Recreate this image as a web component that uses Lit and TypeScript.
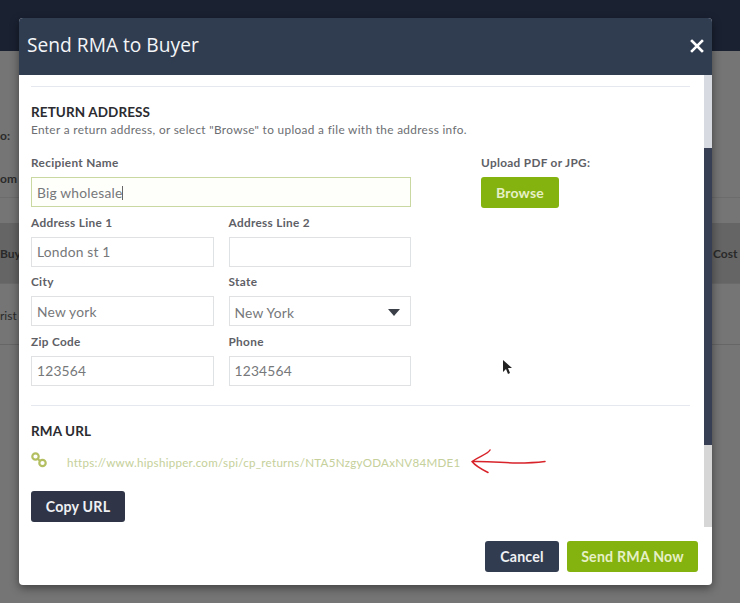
import { LitElement, html, css } from "lit";
import { customElement } from "lit/decorators.js";

@customElement("app-root")
export class AppRoot extends LitElement {
  static styles = css`
    :host { display: block; width: 740px; height: 603px; position: relative; overflow: hidden; background: #747474; font-family: "Lato", "Open Sans", "Liberation Sans", sans-serif; color: #555; }
    * { box-sizing: border-box; }
    .topbar { height: 51px; background: #1a2131; }
    .bgwrap { display: flex; flex-direction: column; height: 552px; background: #757575; }
    .bg-a { height: 172px; position: relative; }
    .bg-line { position: absolute; left: 0; right: 0; top: 146px; height: 1px; background: #6c6c6c; }
    .bg-row { height: 61px; background: #656565; border-bottom: 1px solid #6a6a6a; position: relative; }
    .bg-row2 { height: 61px; border-bottom: 1px solid #666; position: relative; }
    .bgt { position: absolute; font-size: 12px; font-weight: 700; color: #2a2a2a; white-space: nowrap; }
    .modal { position: absolute; left: 19px; top: 18px; width: 693px; height: 567px; background: #fff; border-radius: 4px; box-shadow: 0 3px 10px rgba(0,0,0,.45); display: flex; flex-direction: column; overflow: hidden; }
    .mhead { height: 57px; flex: none; background: #303d51; display: flex; align-items: center; justify-content: space-between; padding: 0 8px 4px 8px; color: #f4f6f8; }
    .mtitle { font-size: 19.2px; font-weight: 500; font-family: "Open Sans", "Liberation Sans", sans-serif; }
    .close { width: 14px; height: 14px; display: block; margin-top: 3px; }
    .mbody { flex: 1; display: flex; min-height: 0; }
    .content { flex: 1; min-width: 0; padding: 0 14px 0 12px; }
    .track { width: 8px; flex: none; background: #d4d6dc; display: flex; flex-direction: column; }
    .thumb1 { height: 73px; background: #d8dae2; }
    .thumb2 { height: 297px; background: #363f53; }
    .thumb3 { flex: 1; background: #d6d6d6; }
    .rule { height: 1px; background: #e6e8ef; }
    .rule.top { margin-top: 11px; }
    h3 { margin: 0; font-size: 13.5px; font-weight: 700; color: #2b2b30; line-height: 16px; letter-spacing: .1px; }
    .ra { margin-top: 17px; }
    .sub { font-size: 11.8px; color: #6c6e72; line-height: 14px; margin-top: 3px; letter-spacing: .34px; white-space: nowrap; }
    .formrow { display: flex; margin-top: 19px; }
    .form { width: 380px; display: grid; grid-template-columns: 182.5px 182.5px; column-gap: 15px; }
    .field { display: flex; flex-direction: column; }
    .full { grid-column: 1 / 3; }
    label { font-size: 11.8px; font-weight: 700; color: #5e6066; line-height: 14px; height: 15px; letter-spacing: .32px; white-space: nowrap; }
    .in { height: 30px; margin-top: 6px; margin-bottom: 8.5px; border: 1px solid #e0e1e3; background: #fff; font-size: 13.8px; color: #76787a; padding: 0 5px; display: flex; align-items: center; justify-content: space-between; letter-spacing: .2px; }
    .focus { border-color: #c9d8a0; background: #fefffb; }
    .caret { width: 1px; height: 14px; background: #666; display: inline-block; vertical-align: -2px; }
    .tri { width: 12px; height: 7px; display: block; margin-right: 5px; }
    .sel { padding-top: 2px; }
    .upload { margin-left: 70px; display: flex; flex-direction: column; align-items: flex-start; }
    .btn { border-radius: 3px; font-weight: 700; font-size: 14.2px; display: flex; align-items: center; justify-content: center; letter-spacing: .2px; }
    .green { background: #84b20f; color: #e6f0c6; }
    .dark { background: #323c50; color: #eef0f3; }
    .browse { width: 78px; height: 30.5px; margin-top: 6px; font-size: 14px; }
    .rule.mid { margin-top: 11px; }
    .rma { margin-top: 17px; }
    .urlrow { display: flex; align-items: center; margin-top: 12px; height: 22px; }
    .link { width: 18px; height: 18px; flex: none; margin-top: -2px; }
    .url { margin-left: 18px; font-size: 11.6px; color: #c5d09a; white-space: nowrap; letter-spacing: .27px; }
    .copy { width: 94px; height: 31px; margin-top: 18px; background: #2f3546; }
    .mfoot { height: 58px; flex: none; display: flex; justify-content: flex-end; align-items: flex-start; gap: 8px; padding: 14px 14px 0 0; }
    .cancel { width: 74px; height: 31px; }
    .send { width: 131px; height: 31px; }
    .cursor { position: absolute; left: 502px; top: 360px; width: 11px; height: 16px; }
    .arrow { position: absolute; left: 468px; top: 449px; width: 80px; height: 30px; }
  `;

  render() {
    return html`
      <div class="topbar"></div>
      <div class="bgwrap">
        <div class="bg-a">
          <span class="bgt" style="left:0;top:77px">o:</span>
          <span class="bgt" style="left:0;top:120px">om</span>
          <div class="bg-line"></div>
        </div>
        <div class="bg-row">
          <span class="bgt" style="left:0;top:23px">Buy</span>
          <span class="bgt" style="left:713px;top:23px">Cost</span>
        </div>
        <div class="bg-row2">
          <span class="bgt" style="left:0;top:24px;font-weight:400">rist</span>
        </div>
      </div>
      <div class="modal">
        <div class="mhead">
          <span class="mtitle">Send RMA to Buyer</span>
          <svg class="close" viewBox="0 0 14 14"><path d="M2 2l10 10M12 2L2 12" stroke="#fff" stroke-width="2.6" stroke-linecap="square"/></svg>
        </div>
        <div class="mbody">
          <div class="content">
            <div class="rule top"></div>
            <div class="ra">
              <h3>RETURN ADDRESS</h3>
              <div class="sub">Enter a return address, or select "Browse" to upload a file with the address info.</div>
            </div>
            <div class="formrow">
              <div class="form">
                <div class="field full"><label>Recipient Name</label><div class="in focus"><span>Big wholesale<i class="caret"></i></span></div></div>
                <div class="field"><label>Address Line 1</label><div class="in">London st 1</div></div>
                <div class="field"><label>Address Line 2</label><div class="in"></div></div>
                <div class="field"><label>City</label><div class="in">New york</div></div>
                <div class="field"><label>State</label><div class="in sel"><span>New York</span><svg class="tri" viewBox="0 0 12 7"><path d="M0 0h12L6 7z" fill="#3a3f48"/></svg></div></div>
                <div class="field"><label>Zip Code</label><div class="in">123564</div></div>
                <div class="field"><label>Phone</label><div class="in">1234564</div></div>
              </div>
              <div class="upload">
                <label>Upload PDF or JPG:</label>
                <div class="btn green browse">Browse</div>
              </div>
            </div>
            <div class="rule mid"></div>
            <div class="rma">
              <h3>RMA URL</h3>
              <div class="urlrow">
                <svg class="link" viewBox="0 0 18 18" fill="none" stroke="#b4bf62" stroke-width="2.2"><circle cx="4.5" cy="4.5" r="3.2"/><circle cx="11.5" cy="11" r="3.2"/><path d="M7 7l2 2"/></svg>
                <span class="url">https://www.hipshipper.com/spi/cp_returns/NTA5NzgyODAxNV84MDE1</span>
              </div>
            </div>
            <div class="btn dark copy">Copy URL</div>
          </div>
          <div class="track"><div class="thumb1"></div><div class="thumb2"></div><div class="thumb3"></div></div>
        </div>
        <div class="mfoot">
          <div class="btn dark cancel">Cancel</div>
          <div class="btn green send">Send RMA Now</div>
        </div>
      </div>
      <svg class="cursor" viewBox="0 0 11 16"><path d="M1 0v12l3-3 2 5 2-1-2-5h4z" fill="#222"/></svg>
      <svg class="arrow" viewBox="0 0 80 30" fill="none" stroke="#d8232a" stroke-width="1.5" stroke-linecap="round" stroke-linejoin="round"><path d="M77 12.500c-8 1-18 1.500-28 1.500-14 0-26-2-45-1.500M22 1c-2 4-10 6-18 11.500 3 4 10 8 16 11"/></svg>
    `;
  }
}
